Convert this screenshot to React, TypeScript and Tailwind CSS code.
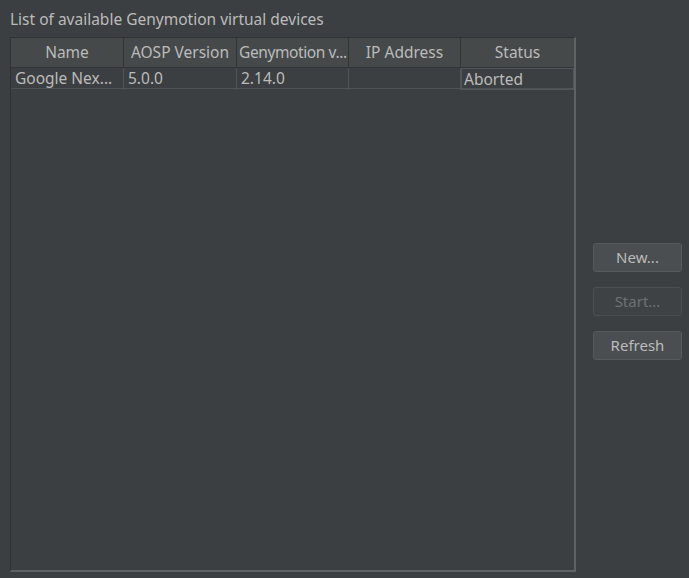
const columns = ['Name', 'AOSP Version', 'Genymotion v...', 'IP Address', 'Status'];

const rows = [['Google Nex...', '5.0.0', '2.14.0', '', 'Aborted']];

function ActionButton({ label, disabled }: { label: string; disabled?: boolean }) {
  return (
    <button
      className={
        disabled
          ? 'h-[29px] w-[89px] rounded-[3px] border border-[#4b4f51] bg-[#3e4244] text-[15px] text-[#6e7173]'
          : 'h-[29px] w-[89px] rounded-[3px] border border-[#565a5c] bg-[#4a4e50] text-[15px] text-[#bbbbbb]'
      }
    >
      {label}
    </button>
  );
}

export default function App() {
  return (
    <div
      className="h-[578px] w-[689px] overflow-hidden bg-[#3c3f41] text-[#bbbbbb]"
      style={{ fontFamily: '"Noto Sans", "Open Sans", sans-serif' }}
    >
      <div className="px-[10px] pt-[9px] text-[15.5px] leading-[21px]">List of available Genymotion virtual devices</div>

      <div className="flex pl-[10px] pt-[7px]">
        {/* Device table */}
        <div className="flex h-[535px] w-[566px] flex-col border-b-2 border-l border-r-2 border-t border-b-[#5e6263] border-l-[#2f3133] border-r-[#5e6263] border-t-[#2f3133]">
          <div className="grid h-[30px] grid-cols-[113px_113px_112px_112px_1fr] border-b border-[#323436] bg-[#45494a] text-[15.5px]">
            {columns.map((c, i) => (
              <div
                key={c}
                className={
                  i === 2
                    ? 'flex items-center overflow-hidden border-r border-[#323436] pl-[2px] tracking-[-0.4px] whitespace-nowrap'
                    : i < columns.length - 1
                      ? 'flex items-center justify-center overflow-hidden border-r border-[#323436] whitespace-nowrap'
                      : 'flex items-center justify-center overflow-hidden whitespace-nowrap'
                }
              >
                {c}
              </div>
            ))}
          </div>
          {rows.map((r, ri) => (
            <div key={ri} className="grid h-[21px] grid-cols-[113px_113px_112px_112px_1fr] border-b border-[#4f5355] text-[15.5px] leading-[20px]">
              {r.map((v, i) => (
                <div
                  key={i}
                  className={
                    i === r.length - 1
                      ? 'border border-[#53575a] px-[2px] whitespace-nowrap'
                      : 'overflow-hidden border-r border-[#4f5355] px-[4px] whitespace-nowrap'
                  }
                >
                  {v}
                </div>
              ))}
            </div>
          ))}
        </div>

        {/* Actions */}
        <div className="flex flex-col gap-[15px] pl-[17px] pt-[206px]">
          <ActionButton label="New..." />
          <ActionButton label="Start..." disabled />
          <ActionButton label="Refresh" />
        </div>
      </div>
    </div>
  );
}
